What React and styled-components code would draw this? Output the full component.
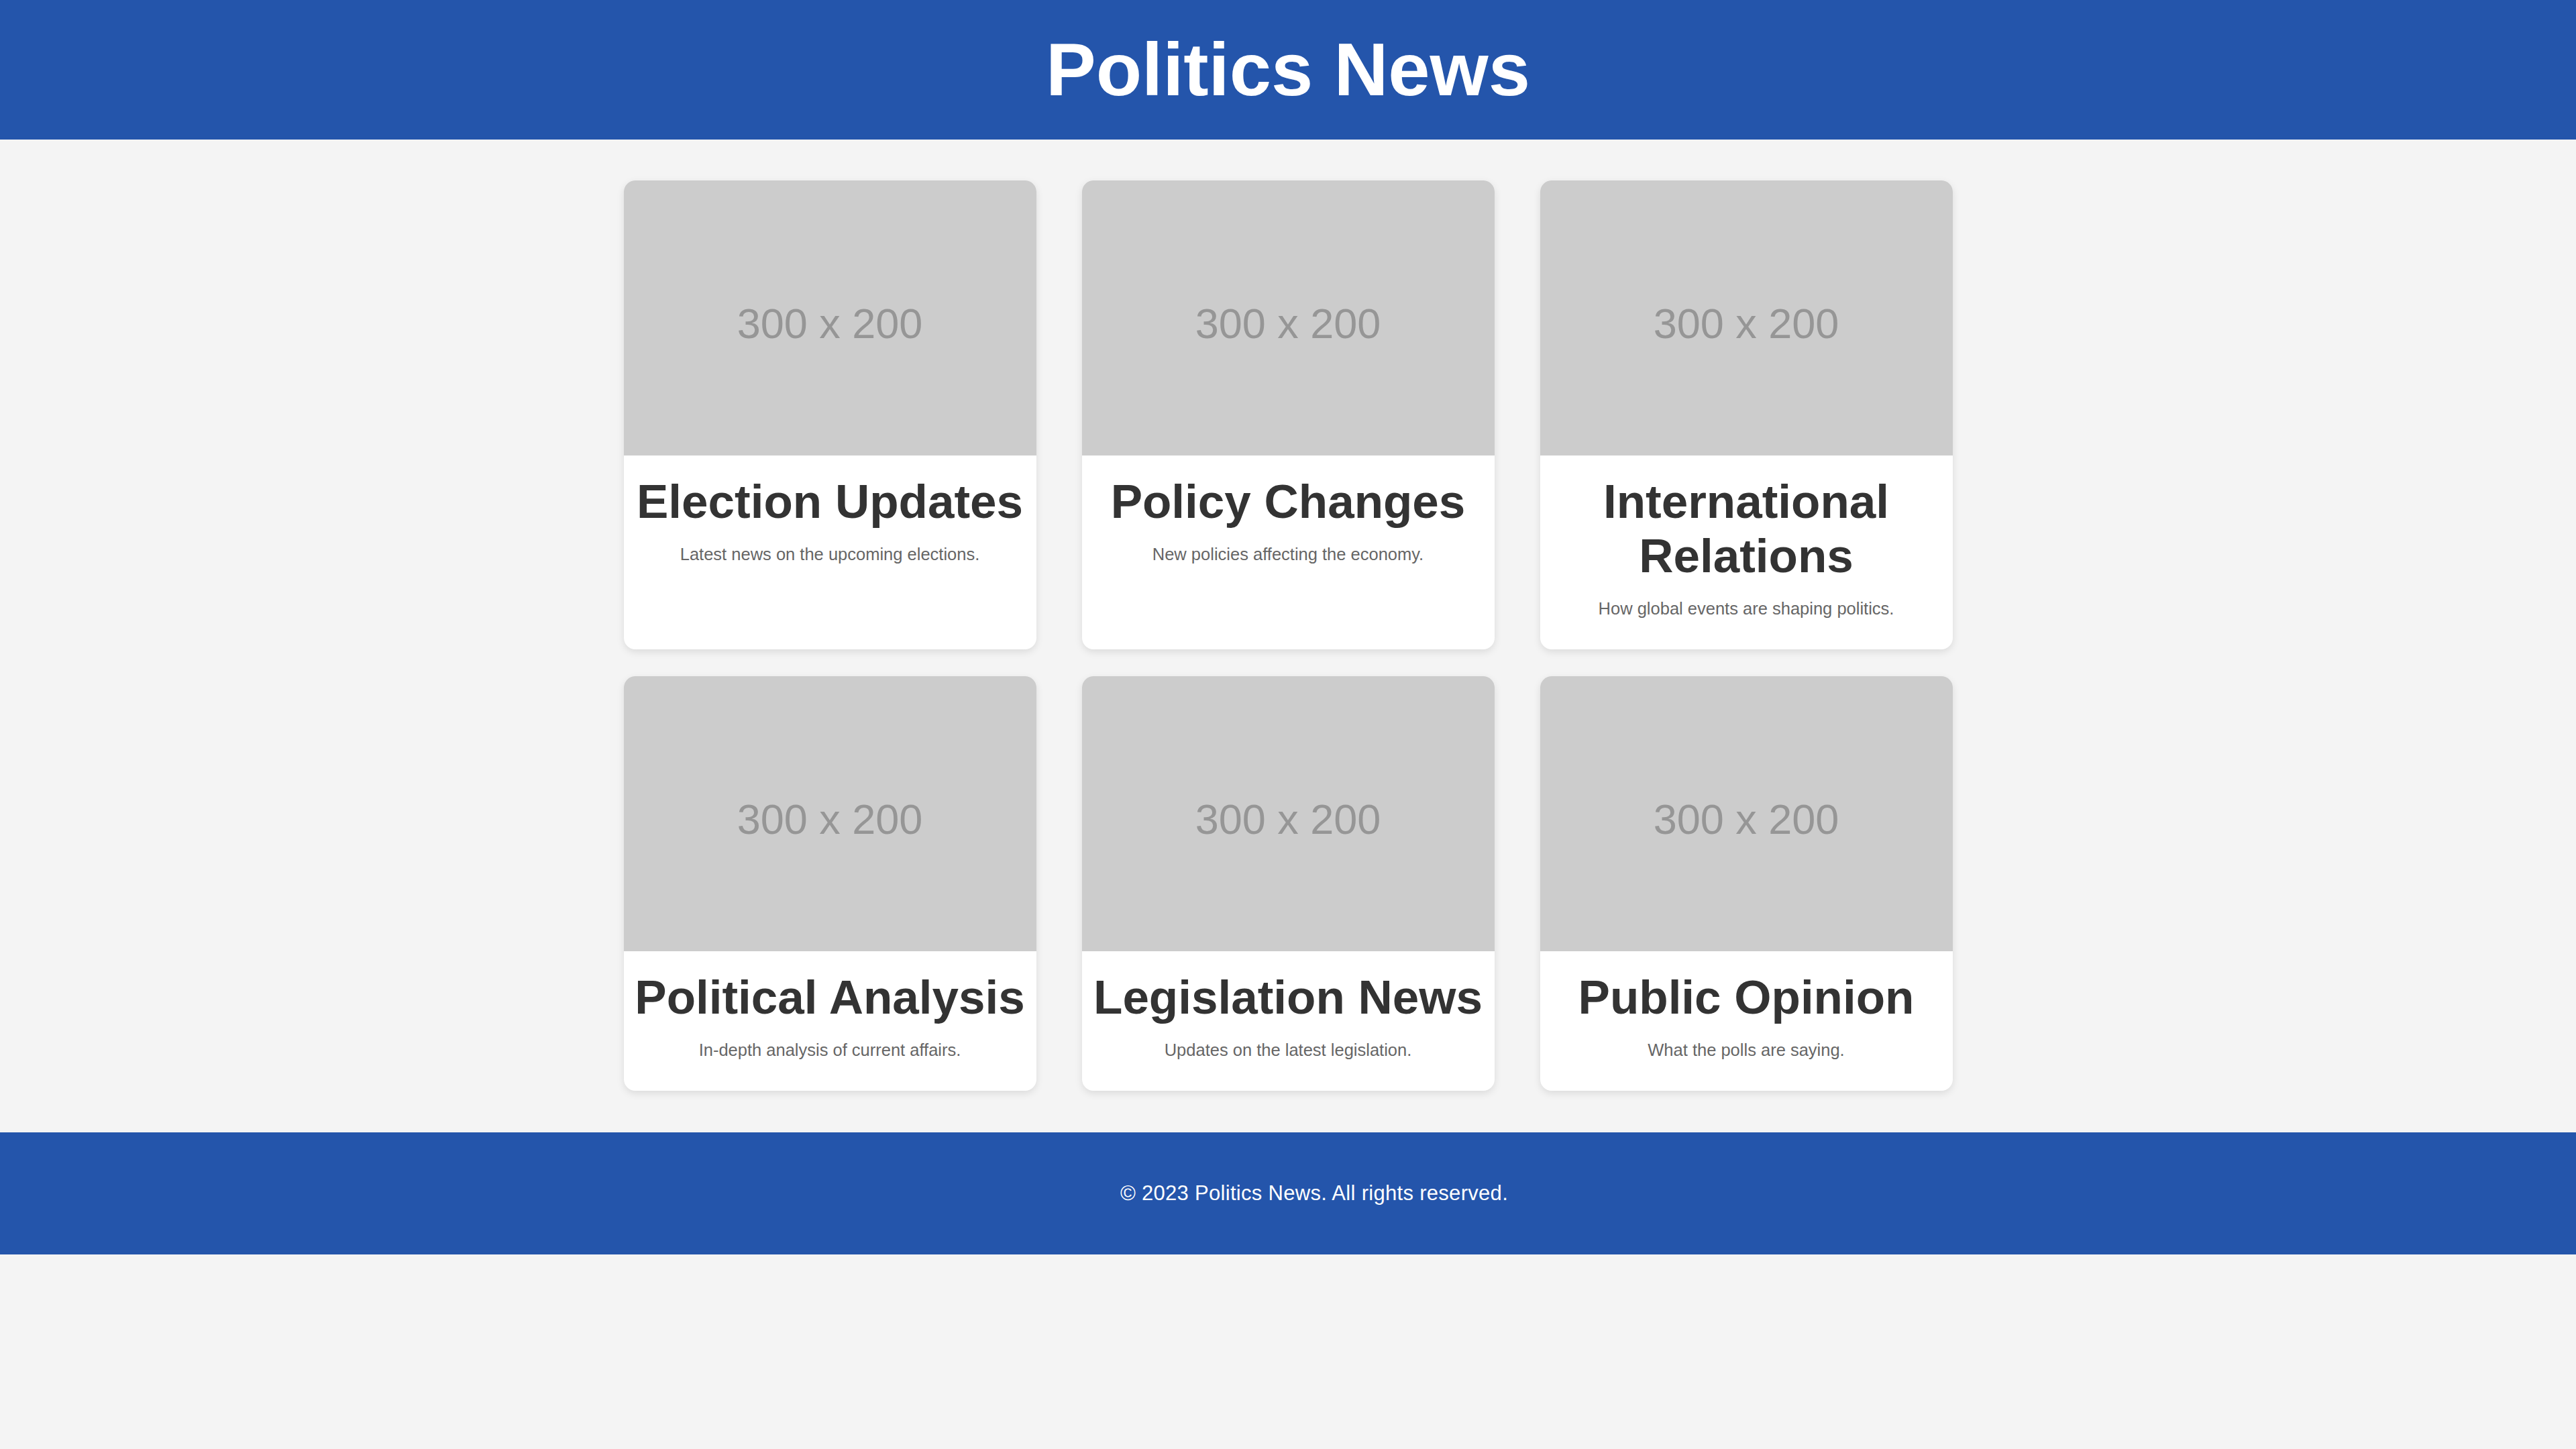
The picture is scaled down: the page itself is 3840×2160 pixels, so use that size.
import styled, { createGlobalStyle } from "styled-components";

const GlobalStyle = createGlobalStyle`
    body {
        margin: 0;
        background-color: #f4f4f4;
        font-family: "Liberation Sans", Arial, sans-serif;
    }
`;

const articles = [
    { title: "Election Updates", text: "Latest news on the upcoming elections." },
    { title: "Policy Changes", text: "New policies affecting the economy." },
    { title: "International Relations", text: "How global events are shaping politics." },
    { title: "Political Analysis", text: "In-depth analysis of current affairs." },
    { title: "Legislation News", text: "Updates on the latest legislation." },
    { title: "Public Opinion", text: "What the polls are saying." },
];

const NewsCard = ({ title, text }) => (
    <Card>
        <Placeholder>300 x 200</Placeholder>
        <CardContent>
            <CardTitle>{title}</CardTitle>
            <CardText>{text}</CardText>
        </CardContent>
    </Card>
);

export default function App() {
    return (
        <>
            <GlobalStyle />
            <Header>
                <Title>Politics News</Title>
            </Header>
            <Main>
                <Grid>
                    {articles.map((a) => (
                        <NewsCard key={a.title} title={a.title} text={a.text} />
                    ))}
                </Grid>
            </Main>
            <Footer>© 2023 Politics News. All rights reserved.</Footer>
        </>
    );
}

const Header = styled.header`
    background-color: #2455ab;
    color: #fff;
    text-align: center;
    padding: 39px 0 40px;
`;

const Title = styled.h1`
    margin: 0;
    font-size: 112px;
    font-weight: bold;
`;

const Main = styled.main`
    padding: 61px 0 62px;
`;

const Grid = styled.div`
    display: grid;
    grid-template-columns: repeat(3, 615px);
    justify-content: center;
    column-gap: 68px;
    row-gap: 40px;
`;

const Card = styled.div`
    background-color: #fff;
    border-radius: 17px;
    overflow: hidden;
    box-shadow: 0 4px 12px rgba(0, 0, 0, 0.1);
    text-align: center;
`;

const Placeholder = styled.div`
    height: 410px;
    box-sizing: border-box;
    padding-top: 16px;
    background-color: #cccccc;
    color: #969696;
    font-size: 63px;
    display: flex;
    align-items: center;
    justify-content: center;
`;

const CardContent = styled.div`
    padding: 28px 8px 46px;
`;

const CardTitle = styled.h2`
    margin: 0 0 24px;
    font-size: 71px;
    font-weight: bold;
    color: #333;
`;

const CardText = styled.p`
    margin: 0;
    font-size: 25.5px;
    color: #666;
`;

const Footer = styled.footer`
    background-color: #2455ab;
    color: #fff;
    text-align: center;
    font-size: 31px;
    letter-spacing: 0.3px;
    padding: 73px 0 73px 78px;
`;
